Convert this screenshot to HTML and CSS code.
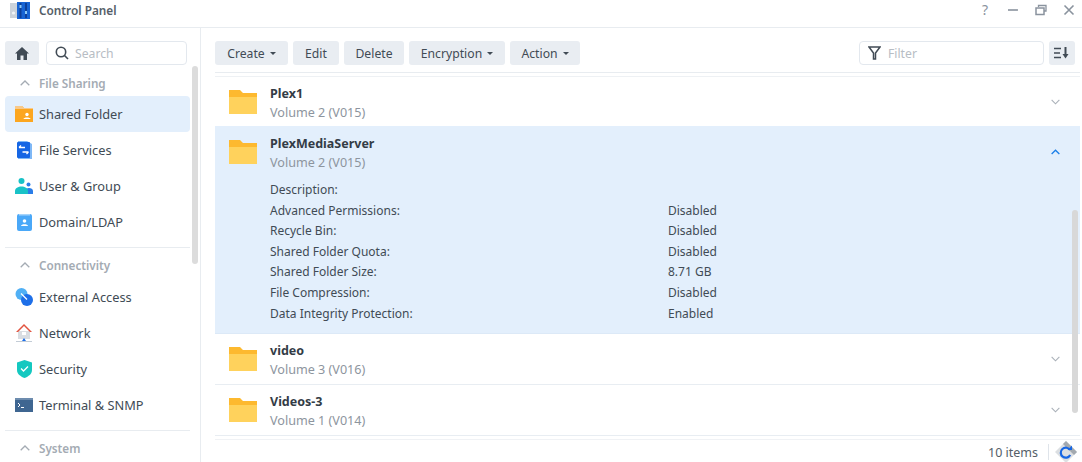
FILE: index.html
```html
<!DOCTYPE html>
<html lang="en">
<head>
<meta charset="utf-8">
<title>Control Panel</title>
<link rel="stylesheet" href="styles.css">
</head>
<body>
<div class="window">
  <header class="titlebar">
    <svg class="app-icon" width="20" height="17" viewBox="0 0 20 17"><rect x="0" y="1" width="7" height="15" fill="#ccd3db"/><circle cx="3.500" cy="11" r="1.600" fill="#f2f5f8"/><rect x="7" y="0" width="13" height="17" fill="#1764d4"/><path d="M10.500 1v15M16 1v15" stroke="#0e3f97" stroke-width="2"/><rect x="9.500" y="3" width="2" height="3" fill="#8ccaf7"/><rect x="15" y="9" width="2" height="3" fill="#8ccaf7"/></svg>
    <span class="app-title">Control Panel</span>
    <div class="win-controls">
      <span class="win-q">?</span>
      <svg width="12" height="12" viewBox="0 0 12 12"><path d="M1 6h10" stroke="#8a939e" stroke-width="1.600"/></svg>
      <svg width="12" height="12" viewBox="0 0 12 12"><path d="M3.500 3V1.500H11V7H9" fill="none" stroke="#8a939e" stroke-width="1.300"/><rect x="1" y="4" width="8" height="6.500" fill="none" stroke="#8a939e" stroke-width="1.500"/></svg>
      <svg width="12" height="12" viewBox="0 0 12 12"><path d="M1.500 1.500l9 9M10.500 1.500l-9 9" stroke="#8a939e" stroke-width="1.600"/></svg>
    </div>
  </header>
  <div class="body">
    <aside class="sidebar">
      <div class="side-top">
        <button class="home-btn"><svg width="14" height="13" viewBox="0 0 14 13"><path d="M7 0L0 6.500h2V13h3.500V8.500h3V13H12V6.500h2z" fill="#414b55"/></svg></button>
        <div class="search"><svg width="14" height="14" viewBox="0 0 14 14"><circle cx="6" cy="6" r="4.700" fill="none" stroke="#414b55" stroke-width="1.600"/><path d="M9.500 9.500l3.500 3.500" stroke="#414b55" stroke-width="1.600"/></svg><span>Search</span></div>
      </div>
      <div class="side-scroll"></div>
      <nav class="nav">
        <div class="sec-head first"><svg class="caret" width="10" height="6" viewBox="0 0 10 6"><path d="M.7 5.300L5 1l4.300 4.300" fill="none" stroke="#a4abb3" stroke-width="1.300"/></svg>File Sharing</div>
        <div class="nav-item selected">
          <svg width="18" height="16" viewBox="0 0 18 16"><path d="M0 0h7l2 2h9v14H0z" fill="#fca61f"/><path d="M0 0h7l2 2h9v1H0z" fill="#f8c98a"/><circle cx="12" cy="8.500" r="1.700" fill="#fff"/><path d="M8.500 13c0-2 7-2 7 0z" fill="#fff"/></svg>
          <span>Shared Folder</span>
        </div>
        <div class="nav-item">
          <svg width="18" height="18" viewBox="0 0 18 18"><path d="M3 0h9l5 3v15H3z" fill="#7fb8f6"/><rect x="2" y="1" width="13" height="16" rx="1" fill="#1666e4"/><path d="M4 6.500h6M4 6.500l2-2M13.500 11h-6M13.500 11l-2 2" stroke="#fff" stroke-width="1.300" fill="none"/></svg>
          <span>File Services</span>
        </div>
        <div class="nav-item">
          <svg width="18" height="16" viewBox="0 0 18 16"><circle cx="13.500" cy="6.500" r="2" fill="#2a7de8"/><path d="M10 16v-3c0-4 8-4 8 0v3z" fill="#2a7de8"/><circle cx="6.500" cy="3" r="3" fill="#19c2c7"/><path d="M0 16v-3c0-6 13-6 13 0v3z" fill="#19c2c7"/></svg>
          <span>User &amp; Group</span>
        </div>
        <div class="nav-item">
          <svg width="18" height="17" viewBox="0 0 18 17"><rect x="2" width="15" height="17" rx="2" fill="#4aa8f8"/><rect x="4" y="0" width="11" height="1.500" fill="#a6d4fb"/><circle cx="9.500" cy="7" r="1.800" fill="#fff"/><path d="M6 12c0-2.500 7-2.500 7 0z" fill="#fff"/></svg>
          <span>Domain/LDAP</span>
        </div>
        <div class="sec-head divided"><svg class="caret" width="10" height="6" viewBox="0 0 10 6"><path d="M.7 5.300L5 1l4.300 4.300" fill="none" stroke="#a4abb3" stroke-width="1.300"/></svg>Connectivity</div>
        <div class="nav-item">
          <svg width="18" height="18" viewBox="0 0 18 18"><circle cx="6.500" cy="6" r="6" fill="#50b0f5"/><circle cx="12" cy="12" r="6" fill="#1e6fe8"/><path d="M6 5.500l6 6" stroke="#fff" stroke-width="1.300"/></svg>
          <span>External Access</span>
        </div>
        <div class="nav-item">
          <svg width="18" height="19" viewBox="0 0 18 19"><path d="M3 7h12v8H3z" fill="#d9dde2"/><path d="M9 0L1 8h2l6-6 6 6h2z" fill="#e2533f"/><rect x="7" y="8" width="4" height="3" fill="#fff"/><path d="M1 17.500h16" stroke="#c3ccd6"/><path d="M9 14l-2 3h4z" fill="#1e6fe8"/></svg>
          <span>Network</span>
        </div>
        <div class="nav-item">
          <svg width="18" height="18" viewBox="0 0 18 18"><path d="M9.500 0l7.500 2.500V10c0 4-3.500 6.500-7.500 8-4-1.500-7.500-4-7.500-8V2.500z" fill="#14c8c0"/><path d="M6 8.500l2.500 2.500 4.500-4.500" fill="none" stroke="#fff" stroke-width="1.300"/></svg>
          <span>Security</span>
        </div>
        <div class="nav-item">
          <svg width="18" height="14" viewBox="0 0 18 14"><rect width="18" height="14" fill="#3f6691"/><rect width="18" height="2" fill="#6d8cae"/><path d="M3 5l2 2-2 2M6 9.500h3" fill="none" stroke="#fff" stroke-width="1"/></svg>
          <span>Terminal &amp; SNMP</span>
        </div>
        <div class="sec-head divided"><svg class="caret" width="10" height="6" viewBox="0 0 10 6"><path d="M.7 5.300L5 1l4.300 4.300" fill="none" stroke="#a4abb3" stroke-width="1.300"/></svg>System</div>
      </nav>
    </aside>
    <main class="main">
      <div class="toolbar">
        <button class="btn w-create">Create<i class="tri"></i></button>
        <button class="btn w-edit">Edit</button>
        <button class="btn w-delete">Delete</button>
        <button class="btn w-enc">Encryption<i class="tri"></i></button>
        <button class="btn w-action">Action<i class="tri"></i></button>
        <div class="filter"><svg width="13" height="14" viewBox="0 0 13 14"><path d="M1 1h11L7.500 7v6h-2V7z" fill="none" stroke="#414b55" stroke-width="1.500"/></svg><span>Filter</span></div>
        <button class="btn sort"><svg width="16" height="12" viewBox="0 0 16 12"><path d="M0 1.500h7M0 6h6M0 10.500h7" stroke="#414b55" stroke-width="1.500"/><path d="M11.500 0v8" stroke="#414b55" stroke-width="2"/><path d="M8.500 7h6l-3 4.500z" fill="#414b55"/></svg></button>
      </div>
      <div class="list-rule"></div>
      <div class="list">
        <section class="row top">
          <div class="row-head">
            <svg class="folder" width="28" height="24" viewBox="0 0 28 24"><path d="M0 0h11l3 3h14v21H0z" fill="#fdb92f"/><rect y="7" width="28" height="17" fill="#ffd25c"/></svg>
            <div class="names"><div class="name">Plex1</div><div class="vol">Volume 2 (V015)</div></div>
            <svg class="chev" width="9" height="6" viewBox="0 0 10 6"><path d="M.7.7L5 5 9.300.7" fill="none" stroke="#a9b0b8" stroke-width="1.200"/></svg>
          </div>
        </section>
        <section class="row open">
          <div class="row-head">
            <svg class="folder" width="28" height="24" viewBox="0 0 28 24"><path d="M0 0h11l3 3h14v21H0z" fill="#fdb92f"/><rect y="7" width="28" height="17" fill="#ffd25c"/></svg>
            <div class="names"><div class="name">PlexMediaServer</div><div class="vol">Volume 2 (V015)</div></div>
            <svg class="chev" width="9" height="6" viewBox="0 0 10 6"><path d="M.7 5.300L5 1l4.300 4.300" fill="none" stroke="#1a7fe8" stroke-width="1.400"/></svg>
          </div>
          <dl class="details">
            <dt>Description:</dt><dd></dd>
            <dt>Advanced Permissions:</dt><dd>Disabled</dd>
            <dt>Recycle Bin:</dt><dd>Disabled</dd>
            <dt>Shared Folder Quota:</dt><dd>Disabled</dd>
            <dt>Shared Folder Size:</dt><dd>8.71 GB</dd>
            <dt>File Compression:</dt><dd>Disabled</dd>
            <dt>Data Integrity Protection:</dt><dd>Enabled</dd>
          </dl>
        </section>
        <section class="row">
          <div class="row-head">
            <svg class="folder" width="28" height="24" viewBox="0 0 28 24"><path d="M0 0h11l3 3h14v21H0z" fill="#fdb92f"/><rect y="7" width="28" height="17" fill="#ffd25c"/></svg>
            <div class="names"><div class="name">video</div><div class="vol">Volume 3 (V016)</div></div>
            <svg class="chev" width="9" height="6" viewBox="0 0 10 6"><path d="M.7.7L5 5 9.300.7" fill="none" stroke="#a9b0b8" stroke-width="1.200"/></svg>
          </div>
        </section>
        <section class="row">
          <div class="row-head">
            <svg class="folder" width="28" height="24" viewBox="0 0 28 24"><path d="M0 0h11l3 3h14v21H0z" fill="#fdb92f"/><rect y="7" width="28" height="17" fill="#ffd25c"/></svg>
            <div class="names"><div class="name">Videos-3</div><div class="vol">Volume 1 (V014)</div></div>
            <svg class="chev" width="9" height="6" viewBox="0 0 10 6"><path d="M.7.7L5 5 9.300.7" fill="none" stroke="#a9b0b8" stroke-width="1.200"/></svg>
          </div>
        </section>
        <div class="list-scroll"></div>
      </div>
      <footer class="footer">
        <span class="count">10 items</span>
        <span class="foot-sep"></span>
        <svg class="refresh" width="22" height="22" viewBox="0 0 22 22"><path d="M11 0l11 11-11 11L0 11z" fill="#dcdfe2"/><path d="M11 0l11 11-3 3L8 3z" fill="#a3a9af"/><path d="M15 9A5 5 0 1 0 15.200 14" fill="none" stroke="#1666e4" stroke-width="2.200"/><path d="M12.500 9h4.500V4.500z" fill="#1666e4"/></svg>
      </footer>
    </main>
  </div>
</div>
</body>
</html>
```
FILE: styles.css
```css
* { box-sizing: border-box; }
html, body { margin: 0; padding: 0; height: 100%; background: #fff; overflow: hidden; }
body { font-family: "Noto Sans", sans-serif; font-size: 13px; color: #414b55; }
.window { width: 1082px; height: 462px; display: flex; flex-direction: column; }

.titlebar { height: 28px; flex: none; display: flex; align-items: center; padding: 0 7px 7px 10px; border-bottom: 1px solid #e8ecf0; }
.app-icon { margin-right: 9px; }
.app-title { font-size: 11.800px; font-weight: 600; color: #555e68; }
.win-controls { margin-left: auto; display: flex; align-items: center; gap: 16px; }
.win-q { font-size: 14px; color: #8a939e; width: 12px; text-align: center; line-height: 14px; }

.body { flex: 1; display: flex; min-height: 0; }

.sidebar { width: 201px; flex: none; position: relative; border-right: 1px solid #e8ecf0; padding: 13px 0 0 5px; overflow: hidden; }
.side-top { display: flex; gap: 7px; width: 182px; }
.home-btn { width: 34px; height: 24px; border: 0; border-radius: 3px; background: #e9edf2; padding: 0; display: flex; align-items: center; justify-content: center; }
.search { width: 141px; height: 24px; border: 1px solid #e3e8ee; border-radius: 4px; display: flex; align-items: center; gap: 6px; padding-left: 8px; font-size: 12.200px; color: #b7bdc4; }
.side-scroll { position: absolute; left: 192px; top: 38px; width: 6px; height: 198px; border-radius: 3px; background: #dcdcdc; }

.nav { width: 185px; margin-top: 6px; }
.sec-head { display: flex; align-items: center; padding-left: 15px; gap: 9px; font-size: 11.700px; font-weight: 600; color: #a4abb3; }
.sec-head.first { height: 25px; padding-bottom: 2px; }
.sec-head.divided { border-top: 1px solid #e8ecf0; height: 32px; margin-top: 7px; padding-top: 4px; align-items: flex-start; line-height: 26px; }
.sec-head .caret { flex: none; }
.sec-head.divided .caret { margin-top: 10px; }
.nav-item { height: 36px; display: flex; align-items: center; border-radius: 4px; padding-left: 10px; font-size: 12.800px; color: #414b55; }
.nav-item svg { width: 18px; flex: none; margin-right: 6px; }
.nav-item.selected { background: #e3effc; }

.main { flex: 1; min-width: 0; display: flex; flex-direction: column; padding-left: 14px; position: relative; }
.toolbar { display: flex; align-items: center; gap: 5px; padding-top: 13px; height: 37px; flex: none; }
.btn { height: 24px; border: 0; border-radius: 3px; background: #e9edf2; color: #414b55; font: 12.200px "Noto Sans", sans-serif; padding: 0; display: flex; align-items: center; justify-content: center; gap: 5px; }
.w-create { width: 73px; } .w-edit { width: 46px; } .w-delete { width: 60px; } .w-enc { width: 96px; } .w-action { width: 70px; }
.tri { width: 0; height: 0; border-left: 3px solid transparent; border-right: 3px solid transparent; border-top: 3px solid #414b55; margin-top: 1px; }
.filter { margin-left: auto; width: 185px; height: 24px; border: 1px solid #e3e8ee; border-radius: 4px; display: flex; align-items: center; gap: 7px; padding-left: 8px; font-size: 12.200px; color: #b7bdc4; }
.sort { width: 26px; margin-right: 7px; }

.list-rule { flex: none; margin: 7px 2px 0 0; border-bottom: 1px solid #eef1f4; border-top: 1px solid #e8ecf0; height: 5px; }
.list { height: 359px; flex: none; position: relative; margin-right: 2px; overflow: hidden; }
.row { min-height: 51px; border-bottom: 1px solid #e8edf2; }
.row.top { min-height: 0; border-bottom: 0; }
.row.open { padding-top: 1px; background: #e3effc; border-bottom: 1px solid #dce9f7; }
.row-head { height: 49px; display: flex; align-items: center; padding: 0 20px 0 14px; }
.folder { flex: none; margin-right: 13px; }
.names { flex: 1; padding-top: 3px; }
.name { font-size: 12.500px; font-weight: 700; line-height: 19px; color: #333c46; }
.vol { font-size: 12.600px; line-height: 19px; color: #8d959e; }
.chev { flex: none; }
.details { margin: 0; padding: 3.300px 0 10px 55px; display: grid; grid-template-columns: 398px 1fr; grid-auto-rows: 20.600px; font-size: 12px; align-items: center; color: #414b55; }
.details dt, .details dd { margin: 0; }
.list-scroll { position: absolute; right: 2px; top: 133px; width: 6px; height: 203px; border-radius: 3px; background: #d8d8d8; }

.footer { flex: 1; min-height: 0; display: flex; align-items: center; justify-content: flex-end; padding: 2px 5px 0 0; margin-top: 3px; border-top: 1px solid #f0f2f5; }
.count { font-size: 12.500px; color: #555e68; margin-right: 10px; }
.foot-sep { width: 1px; height: 16px; background: #dfe4ea; margin-right: 6px; }
.refresh { flex: none; }
```
